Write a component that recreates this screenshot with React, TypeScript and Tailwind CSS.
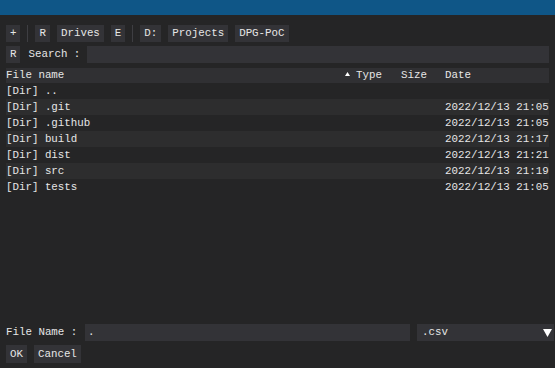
import React from "react";

const rows = [
  { name: "[Dir] ..", date: "" },
  { name: "[Dir] .git", date: "2022/12/13 21:05" },
  { name: "[Dir] .github", date: "2022/12/13 21:05" },
  { name: "[Dir] build", date: "2022/12/13 21:17" },
  { name: "[Dir] dist", date: "2022/12/13 21:21" },
  { name: "[Dir] src", date: "2022/12/13 21:19" },
  { name: "[Dir] tests", date: "2022/12/13 21:05" },
];

function Btn({ label, tall }: { label: string; tall?: boolean }) {
  return (
    <div
      className={`${tall ? "h-[18px]" : "h-[17px]"} px-[4px] bg-[#333337] flex items-center justify-center leading-none`}
    >
      {label}
    </div>
  );
}

function Sep() {
  return <div className="w-px h-[17px] bg-[#3e3e42]" />;
}

export default function App() {
  return (
    <div
      className="w-[555px] h-[368px] bg-[#252526] text-[#e6e6e6] text-[10.8px] flex flex-col overflow-hidden"
      style={{ fontFamily: '"Liberation Mono", "DejaVu Sans Mono", monospace' }}
    >
      {/* title bar */}
      <div className="h-[15px] bg-[#0f5687] shrink-0" />

      {/* path toolbar */}
      <div className="mt-[10px] ml-[6px] flex items-center gap-[7px]">
        <Btn label="+" />
        <Sep />
        <Btn label="R" />
        <Btn label="Drives" />
        <Btn label="E" />
        <Sep />
        <Btn label="D:" />
        <Btn label="Projects" />
        <Btn label="DPG-PoC" />
      </div>

      {/* search */}
      <div className="mt-[4px] mx-[6px] flex items-center">
        <Btn label="R" />
        <span className="ml-[8px] w-[59px]">Search :</span>
        <div className="flex-1 h-[17px] bg-[#333337]" />
      </div>

      {/* file table */}
      <div className="mt-[5px] mx-[6px] flex-1">
        <div className="h-[15px] bg-[#303033] flex items-center">
          <span className="w-[339px]">File name</span>
          <div className="w-[56px] flex items-center">
            <svg width="5" height="4" viewBox="0 0 5 4" className="mb-[3px]">
              <polygon points="2.5,0 5,4 0,4" fill="#ffffff" />
            </svg>
            <span className="ml-[6px]">Type</span>
          </div>
          <span className="w-[44px]">Size</span>
          <span>Date</span>
        </div>
        {rows.map((r, i) => (
          <div
            key={r.name}
            className={`h-[16px] flex items-center ${i % 2 === 1 ? "bg-[#2d2d2e]" : ""}`}
          >
            <span className="w-[439px]">{r.name}</span>
            <span>{r.date}</span>
          </div>
        ))}
      </div>

      {/* footer */}
      <div className="ml-[6px] flex items-center">
        <span className="w-[79px]">File Name :</span>
        <div className="w-[325px] h-[17px] bg-[#333337] flex items-center pl-[3px]">.</div>
        <div className="ml-[7px] w-[137px] h-[17px] bg-[#333337] flex items-center justify-between pl-[5px] pr-[2px]">
          <span>.csv</span>
          <svg width="9" height="8" viewBox="0 0 9 8">
            <polygon points="0,0 9,0 4.5,8" fill="#ffffff" />
          </svg>
        </div>
      </div>
      <div className="mt-[4px] mb-[5px] ml-[6px] flex items-center gap-[7px]">
        <Btn label="OK" tall />
        <Btn label="Cancel" tall />
      </div>
    </div>
  );
}
